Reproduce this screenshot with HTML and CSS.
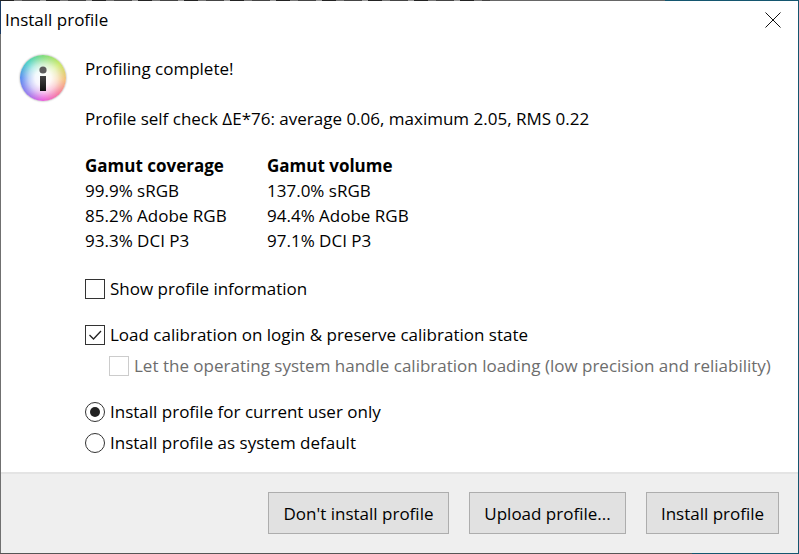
FILE: index.html
```html
<!DOCTYPE html>
<html lang="en">
<head>
<meta charset="utf-8">
<title>Install profile</title>
<link rel="stylesheet" href="styles.css">
</head>
<body>
<div class="window">
  <header class="titlebar">
    <span class="title">Install profile</span>
    <svg class="close" width="16" height="16" viewBox="0 0 16 16"><path d="M.5.5l15 15M15.500.5l-15 15" stroke="#111" stroke-width="1" fill="none"/></svg>
  </header>
  <main class="content">
    <div class="info">
      <svg width="46" height="46" viewBox="0 0 46 46">
        <defs>
          <linearGradient id="bar" x1="0" y1="0" x2="0" y2="1">
            <stop offset="0" stop-color="#444"/>
            <stop offset="1" stop-color="#111"/>
          </linearGradient>
        </defs>
        <circle cx="23" cy="15" r="3.600" fill="#5c5c5c"/>
        <rect x="20" y="21" width="6" height="15" fill="url(#bar)"/>
      </svg>
    </div>
    <div class="body">
      <p class="line">Profiling complete!</p>
      <p class="line check">Profile self check ΔE*76: average 0.06, maximum 2.05, RMS 0.22</p>
      <div class="gamut">
        <div class="col first">
          <b>Gamut coverage</b>
          <span>99.9% sRGB</span>
          <span>85.2% Adobe RGB</span>
          <span>93.3% DCI P3</span>
        </div>
        <div class="col">
          <b>Gamut volume</b>
          <span>137.0% sRGB</span>
          <span>94.4% Adobe RGB</span>
          <span>97.1% DCI P3</span>
        </div>
      </div>
      <label class="opt show"><span class="box"></span>Show profile information</label>
      <label class="opt load"><span class="box"><svg width="18" height="18" viewBox="0 0 18 18"><path d="M3.500 9l4 4 7.500-8" fill="none" stroke="#222" stroke-width="1.300"/></svg></span>Load calibration on login &amp; preserve calibration state</label>
      <label class="opt sub"><span class="box"></span>Let the operating system handle calibration loading (low precision and reliability)</label>
      <label class="opt user"><span class="radio on"></span>Install profile for current user only</label>
      <label class="opt sys"><span class="radio"></span>Install profile as system default</label>
    </div>
  </main>
  <footer class="footer">
    <button class="btn b1">Don't install profile</button>
    <button class="btn b2">Upload profile...</button>
    <button class="btn b3">Install profile</button>
  </footer>
</div>
</body>
</html>
```
FILE: styles.css
```css
* { box-sizing: border-box; }
html, body { margin: 0; padding: 0; }
body { width: 799px; height: 554px; overflow: hidden; background: #fff; font-family: "Open Sans", "Noto Sans", sans-serif; font-size: 17px; color: #000; }
.window {
  width: 799px; height: 554px; display: flex; flex-direction: column; padding: 1px;
  background:
    repeating-linear-gradient(to right, #222 0 14px, #777 14px 22px, #444 22px 40px, #999 40px 46px) left top / 490px 1px no-repeat,
    linear-gradient(to right, #666 0 665px, #14566f 665px) left top / 100% 1px no-repeat,
    linear-gradient(to right, #555 0 692px, #14566f 692px) left bottom / 100% 1px no-repeat,
    linear-gradient(to bottom, #1b3a62 0 34px, #707070 34px) left top / 1px 100% no-repeat,
    linear-gradient(#14566f, #14566f) right top / 1px 100% no-repeat,
    #fff;
}
.titlebar { height: 38px; flex: none; display: flex; align-items: center; justify-content: space-between; padding: 0 17px 0 4px; }
.title { line-height: 36px; }
.content { flex: 1; display: flex; padding: 17px 0 0 19px; }
.info { flex: none; width: 46px; height: 46px; margin-top: -1px; border-radius: 50%; box-shadow: 0 0 2px #888; background: radial-gradient(closest-side, #fff 0, rgba(255,255,255,.92) 35%, rgba(255,255,255,.6) 62%, rgba(255,255,255,.2) 84%, rgba(255,255,255,0) 96%), conic-gradient(#7fdc7c 0deg, #c9e86a 50deg, #f5c07e 95deg, #f57fa0 135deg, #ea62dc 180deg, #9a80ee 225deg, #5c8ff0 270deg, #4fd2c8 315deg, #7fdc7c 360deg); }
.info svg { display: block; }
.body { margin-left: 19px; flex: 1; }
.line { margin: 0; line-height: 25px; }
.check { margin-top: 25px; }
.gamut { display: flex; margin-top: 22px; }
.col { display: flex; flex-direction: column; line-height: 25px; }
.col.first { width: 182px; }
.opt { display: flex; align-items: center; line-height: 25px; }
.show { margin-top: 23px; }
.load { margin-top: 21px; }
.sub { margin: 6px 0 0 24px; color: #6d6d6d; white-space: nowrap; }
.user { margin-top: 21px; }
.sys { margin-top: 6px; }
.box { width: 20px; height: 20px; border: 1px solid #333; margin-right: 5px; flex: none; display: flex; align-items: center; justify-content: center; }
.sub .box { border-color: #ccc; }
.radio { width: 20px; height: 20px; border: 1px solid #333; border-radius: 50%; margin-right: 5px; flex: none; display: flex; align-items: center; justify-content: center; }
.radio.on::after { content: ""; width: 10px; height: 10px; border-radius: 50%; background: #222; }
.footer { height: 81px; flex: none; background: #efefef; border-top: 2px solid #e4e4e4; display: flex; justify-content: flex-end; align-items: flex-start; padding: 18px 19px 0 0; }
.btn { height: 42px; font: inherit; background: #e1e1e1; border: 1px solid #adadad; color: #000; padding: 0; }
.b1 { width: 181px; }
.b2 { width: 157px; margin-left: 20px; }
.b3 { width: 133px; margin-left: 20px; }
```
